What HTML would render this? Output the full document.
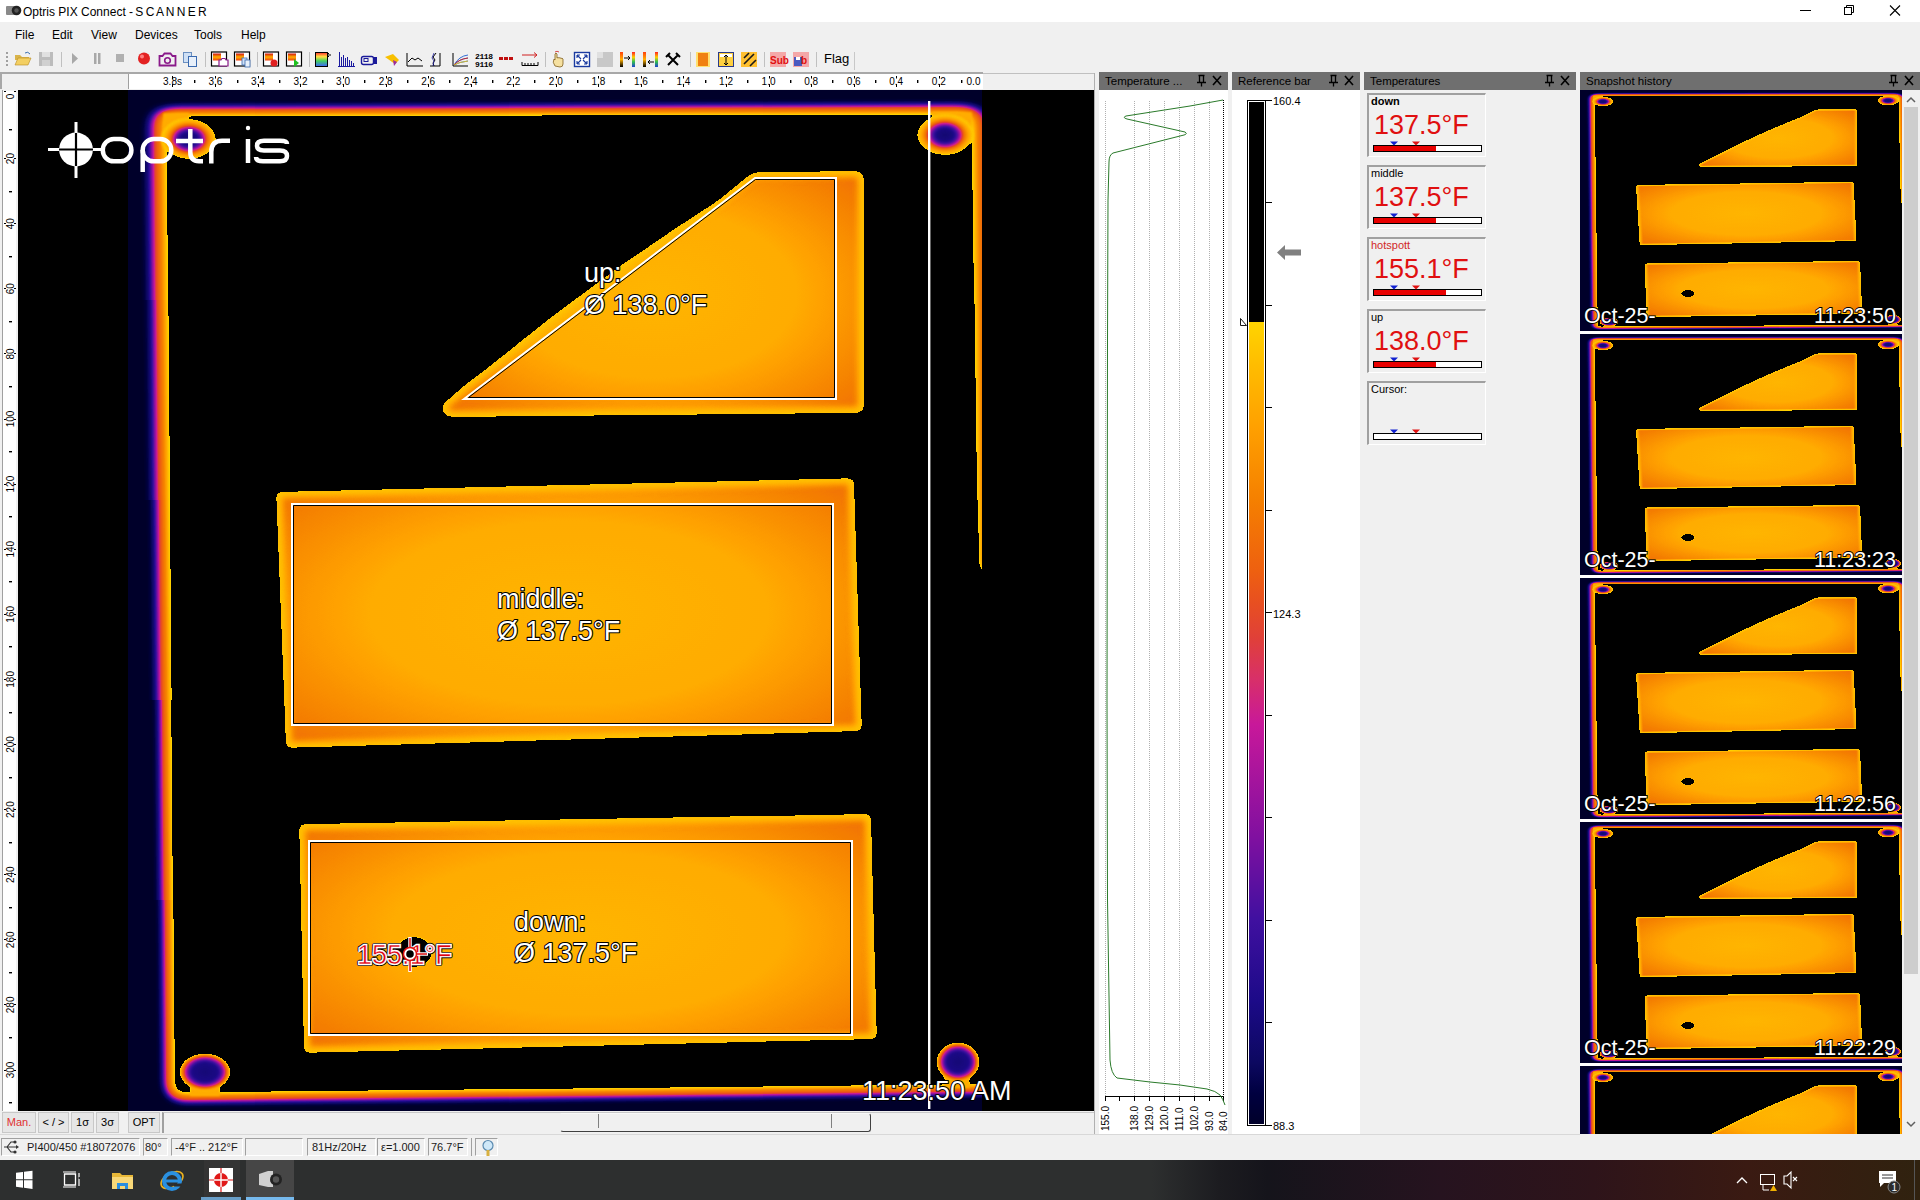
<!DOCTYPE html><html><head><meta charset="utf-8"><style>
*{margin:0;padding:0;box-sizing:border-box}
html,body{width:1920px;height:1200px;overflow:hidden;background:#f0f0f0;font-family:"Liberation Sans",sans-serif;font-size:12px;color:#000}
.a{position:absolute}
.t{position:absolute;white-space:nowrap}
.hdr{position:absolute;top:72px;height:18px;background:#6f6f6f;color:#000;font-size:11.5px}
.hdr span{position:absolute;left:6px;top:3px}
</style></head><body>
<div class="a" style="left:0;top:0;width:1920px;height:22px;background:#fff"></div>
<div class="a" style="left:0;top:22px;width:1920px;height:24px;background:#f0f0f0"></div>
<div class="a" style="left:0;top:46px;width:1920px;height:26px;background:#f0f0f0"></div>
<svg class="a" style="left:0;top:0" width="1920" height="1200" viewBox="0 0 1920 1200"><defs><clipPath id="strip0"><rect x="0" y="0" width="1100" height="300"/></clipPath><filter id="bPl0" x="-0.1" y="-0.1" width="1.2" height="1.2" color-interpolation-filters="sRGB"><feGaussianBlur stdDeviation="8 5"/><feComponentTransfer><feFuncA type="table" tableValues="0 0.096 0.242 0.365 0.488 0.54 0.585 0.63 0.698 0.785 1"/></feComponentTransfer></filter><clipPath id="strip1"><rect x="0" y="300" width="1100" height="200"/></clipPath><filter id="bPl1" x="-0.1" y="-0.1" width="1.2" height="1.2" color-interpolation-filters="sRGB"><feGaussianBlur stdDeviation="7.4 5"/><feComponentTransfer><feFuncA type="table" tableValues="0 0.096 0.242 0.365 0.488 0.54 0.585 0.63 0.698 0.785 1"/></feComponentTransfer></filter><clipPath id="strip2"><rect x="0" y="500" width="1100" height="200"/></clipPath><filter id="bPl2" x="-0.1" y="-0.1" width="1.2" height="1.2" color-interpolation-filters="sRGB"><feGaussianBlur stdDeviation="6.8 5"/><feComponentTransfer><feFuncA type="table" tableValues="0 0.096 0.242 0.365 0.488 0.54 0.585 0.63 0.698 0.785 1"/></feComponentTransfer></filter><clipPath id="strip3"><rect x="0" y="700" width="1100" height="200"/></clipPath><filter id="bPl3" x="-0.1" y="-0.1" width="1.2" height="1.2" color-interpolation-filters="sRGB"><feGaussianBlur stdDeviation="6.1 5"/><feComponentTransfer><feFuncA type="table" tableValues="0 0.096 0.242 0.365 0.488 0.54 0.585 0.63 0.698 0.785 1"/></feComponentTransfer></filter><clipPath id="strip4"><rect x="0" y="900" width="1100" height="300"/></clipPath><filter id="bPl4" x="-0.1" y="-0.1" width="1.2" height="1.2" color-interpolation-filters="sRGB"><feGaussianBlur stdDeviation="5.4 5"/><feComponentTransfer><feFuncA type="table" tableValues="0 0.096 0.242 0.365 0.488 0.54 0.585 0.63 0.698 0.785 1"/></feComponentTransfer></filter>
<filter id="pal" x="0" y="0" width="1" height="1" color-interpolation-filters="sRGB"><feComponentTransfer><feFuncR type="table" tableValues="0 0 0 0 0 0 0 0 0.002 0.008 0.014 0.021 0.027 0.033 0.039 0.045 0.05 0.054 0.058 0.062 0.066 0.07 0.075 0.079 0.083 0.087 0.091 0.095 0.099 0.103 0.107 0.113 0.119 0.126 0.133 0.14 0.147 0.154 0.161 0.168 0.175 0.182 0.189 0.196 0.203 0.209 0.216 0.223 0.23 0.237 0.244 0.251 0.263 0.276 0.288 0.3 0.312 0.325 0.337 0.349 0.362 0.374 0.386 0.399 0.411 0.423 0.436 0.448 0.46 0.472 0.485 0.497 0.508 0.518 0.528 0.538 0.548 0.558 0.568 0.578 0.589 0.599 0.609 0.619 0.629 0.639 0.649 0.659 0.669 0.679 0.689 0.699 0.709 0.719 0.729 0.74 0.75 0.76 0.77 0.78 0.787 0.793 0.798 0.804 0.809 0.815 0.82 0.826 0.831 0.837 0.842 0.847 0.85 0.853 0.857 0.86 0.863 0.866 0.869 0.872 0.875 0.878 0.882 0.885 0.889 0.892 0.896 0.899 0.903 0.906 0.91 0.913 0.916 0.919 0.922 0.925 0.928 0.931 0.934 0.935 0.937 0.938 0.94 0.941 0.943 0.945 0.946 0.948 0.949 0.951 0.952 0.954 0.955 0.957 0.958 0.96 0.962 0.964 0.966 0.968 0.971 0.973 0.975 0.977 0.979 0.982 0.984 0.986 0.988 0.99 0.993 0.995 0.997 0.999 1 1 1 1 1 1 1 1 1 1 1 1 1 1 1 1 1 1 1 1 1 1 1 1 1 1 1 0 0 0 0 0 0 0 0 0 0 0 0 0 0 0 0 0 0 0 0 0 0 0 0 0 0 0 0 0 0 0 0 0 0 0 0 0 0 0 0 0 0 0 0 0 0 0 0 0 0 0 0 0 0 0"/>
<feFuncG type="table" tableValues="0 0 0 0 0 0 0 0 0.001 0.006 0.01 0.014 0.018 0.022 0.026 0.03 0.032 0.032 0.033 0.033 0.034 0.034 0.035 0.035 0.036 0.036 0.037 0.037 0.038 0.038 0.039 0.04 0.041 0.042 0.043 0.044 0.045 0.047 0.048 0.049 0.05 0.051 0.052 0.054 0.055 0.056 0.057 0.058 0.059 0.06 0.062 0.063 0.063 0.063 0.063 0.063 0.063 0.063 0.063 0.063 0.063 0.063 0.063 0.063 0.063 0.063 0.063 0.063 0.063 0.063 0.063 0.063 0.063 0.065 0.066 0.067 0.068 0.069 0.07 0.071 0.072 0.073 0.075 0.076 0.077 0.078 0.079 0.08 0.081 0.082 0.084 0.085 0.086 0.087 0.088 0.089 0.09 0.091 0.092 0.094 0.099 0.107 0.115 0.123 0.131 0.14 0.148 0.156 0.164 0.172 0.181 0.189 0.195 0.201 0.207 0.213 0.219 0.226 0.232 0.238 0.244 0.25 0.257 0.264 0.271 0.278 0.285 0.292 0.299 0.306 0.313 0.322 0.33 0.338 0.346 0.354 0.363 0.371 0.379 0.386 0.393 0.4 0.407 0.414 0.421 0.428 0.435 0.442 0.449 0.456 0.463 0.47 0.477 0.484 0.491 0.498 0.505 0.512 0.519 0.526 0.533 0.54 0.547 0.554 0.561 0.568 0.575 0.582 0.589 0.597 0.604 0.611 0.618 0.625 0.632 0.639 0.646 0.653 0.66 0.668 0.675 0.682 0.689 0.696 0.704 0.711 0.718 0.725 0.732 0.74 0.748 0.757 0.766 0.774 0.783 0.791 0.8 0.808 0.817 0.826 0.831 0 0 0 0 0 0 0 0 0 0 0 0 0 0 0 0 0 0 0 0 0 0 0 0 0 0 0 0 0 0 0 0 0 0 0 0 0 0 0 0 0 0 0 0 0 0 0 0 0 0 0 0 0 0 0"/>
<feFuncB type="table" tableValues="0.165 0.176 0.187 0.199 0.21 0.221 0.232 0.244 0.257 0.273 0.29 0.306 0.322 0.339 0.355 0.372 0.384 0.394 0.404 0.414 0.425 0.435 0.445 0.455 0.466 0.476 0.486 0.496 0.507 0.517 0.527 0.535 0.54 0.544 0.549 0.554 0.558 0.563 0.567 0.572 0.577 0.581 0.586 0.591 0.595 0.6 0.604 0.609 0.614 0.618 0.623 0.627 0.627 0.627 0.627 0.627 0.627 0.627 0.627 0.627 0.627 0.627 0.627 0.627 0.627 0.627 0.627 0.627 0.627 0.627 0.627 0.627 0.627 0.626 0.625 0.624 0.624 0.623 0.622 0.621 0.62 0.619 0.619 0.618 0.617 0.616 0.615 0.614 0.614 0.613 0.612 0.611 0.61 0.609 0.608 0.608 0.607 0.606 0.605 0.604 0.595 0.577 0.56 0.543 0.526 0.509 0.492 0.475 0.458 0.441 0.424 0.406 0.388 0.37 0.351 0.333 0.314 0.296 0.277 0.259 0.24 0.222 0.21 0.2 0.189 0.179 0.168 0.158 0.147 0.137 0.126 0.118 0.109 0.101 0.093 0.085 0.077 0.068 0.062 0.058 0.055 0.051 0.048 0.044 0.041 0.037 0.034 0.03 0.027 0.023 0.02 0.016 0.012 0.009 0.005 0.002 0 0 0 0 0 0 0 0 0 0 0 0 0 0 0 0 0 0 0 0 0 0 0 0 0 0 0 0 0 0 0 0 0 0 0 0 0 0 0 0 0 0 0 0 0 0 0 0 0 0 0 0 0 0 0 0 0 0 0 0 0 0 0 0 0 0 0 0 0 0 0 0 0 0 0 0 0 0 0 0 0 0 0 0 0 0 0 0 0 0 0 0 0 0 0 0 0 0 0 0"/>
</feComponentTransfer></filter>
<filter id="bPlate" x="-0.1" y="-0.1" width="1.2" height="1.2" color-interpolation-filters="sRGB"><feGaussianBlur stdDeviation="6.7 5"/><feComponentTransfer><feFuncA type="table" tableValues="0 0.096 0.242 0.365 0.488 0.54 0.585 0.63 0.698 0.785 1"/></feComponentTransfer></filter>
<filter id="b3" x="-0.1" y="-0.1" width="1.2" height="1.2" color-interpolation-filters="sRGB"><feGaussianBlur stdDeviation="3"/></filter>
<filter id="b1" x="-0.3" y="-0.3" width="1.6" height="1.6" color-interpolation-filters="sRGB"><feGaussianBlur stdDeviation="1.2"/></filter>
<radialGradient id="obj" cx="0.5" cy="0.5" r="0.68"><stop offset="0" stop-color="#b9b9b9"/><stop offset="0.5" stop-color="#b4b4b4"/><stop offset="1" stop-color="#939393"/></radialGradient>
<radialGradient id="hole" cx="0.5" cy="0.5" r="0.5"><stop offset="0" stop-color="#161616"/><stop offset="0.3" stop-color="#1c1c1c"/><stop offset="0.46" stop-color="#404040"/><stop offset="0.56" stop-color="#6b6b6b"/><stop offset="0.68" stop-color="#999"/><stop offset="0.85" stop-color="#b8b8b8"/><stop offset="1" stop-color="#c7c7c7"/></radialGradient>
<radialGradient id="hole2" cx="0.5" cy="0.5" r="0.5"><stop offset="0" stop-color="#181818"/><stop offset="0.5" stop-color="#1e1e1e"/><stop offset="0.66" stop-color="#404040"/><stop offset="0.76" stop-color="#6b6b6b"/><stop offset="0.86" stop-color="#999"/><stop offset="1" stop-color="#c7c7c7"/></radialGradient>
<clipPath id="cam"><rect x="128" y="90" width="854" height="1021"/></clipPath>
<clipPath id="cobj0"><path d="M442.5,407.5 Q443.0,404.0 445.7,401.7 L459.7,389.6 Q465.0,385.0 470.6,380.8 L484.4,370.2 Q490.0,366.0 495.5,361.6 L514.5,346.4 Q520.0,342.0 525.5,337.6 L544.5,322.4 Q550.0,318.0 555.6,313.8 L614.4,270.2 Q620.0,266.0 625.8,262.1 L664.2,235.9 Q670.0,232.0 675.8,228.1 L714.2,202.9 Q720.0,199.0 725.4,194.5 L746.1,177.4 Q749.0,175.0 752.5,173.5 L752.5,173.5 Q756.0,172.0 759.8,172.0 L855.5,171.0 Q859.0,171.0 861.5,173.5 L861.5,173.5 Q864.0,176.0 864.0,179.5 L864.0,405.8 Q864.0,409.0 861.5,411.0 L861.5,411.0 Q859.0,413.0 855.8,413.0 L452.2,417.0 Q448.0,417.0 445.0,414.0 L444.5,413.5 Q442.0,411.0 442.5,407.5 Z"/></clipPath>
<clipPath id="cobj1"><path d="M276.3,499.0 Q276.0,492.0 283.0,491.8 L847.0,478.2 Q854.0,478.0 854.2,485.0 L861.8,724.0 Q862.0,731.0 855.0,731.2 L293.0,747.8 Q286.0,748.0 285.7,741.0 Z"/></clipPath>
<clipPath id="cobj2"><path d="M299.2,831.0 Q299.0,824.0 306.0,823.9 L864.0,814.1 Q871.0,814.0 871.2,821.0 L876.8,1032.0 Q877.0,1039.0 870.0,1039.2 L311.0,1052.8 Q304.0,1053.0 303.8,1046.0 Z"/></clipPath>
<g id="sceneRest"><rect x="163" y="113" width="26" height="26" fill="#b4b4b4" filter="url(#b1)"/>
<rect x="932" y="112" width="40" height="24" fill="#b4b4b4" filter="url(#b1)"/>
<rect x="190" y="1072" width="30" height="24" fill="#b4b4b4" filter="url(#b1)"/>
<rect x="944" y="1062" width="26" height="26" fill="#b4b4b4" filter="url(#b1)"/>
<ellipse cx="189" cy="139" rx="28" ry="21" fill="url(#hole)" filter="url(#b1)"/>
<ellipse cx="945" cy="135" rx="29" ry="21" fill="url(#hole)" filter="url(#b1)"/>
<ellipse cx="205" cy="1072" rx="26" ry="19" fill="url(#hole2)" filter="url(#b1)"/>
<ellipse cx="958" cy="1062" rx="22" ry="20" fill="url(#hole2)" filter="url(#b1)"/>
<g clip-path="url(#cobj0)"><path d="M442.5,407.5 Q443.0,404.0 445.7,401.7 L459.7,389.6 Q465.0,385.0 470.6,380.8 L484.4,370.2 Q490.0,366.0 495.5,361.6 L514.5,346.4 Q520.0,342.0 525.5,337.6 L544.5,322.4 Q550.0,318.0 555.6,313.8 L614.4,270.2 Q620.0,266.0 625.8,262.1 L664.2,235.9 Q670.0,232.0 675.8,228.1 L714.2,202.9 Q720.0,199.0 725.4,194.5 L746.1,177.4 Q749.0,175.0 752.5,173.5 L752.5,173.5 Q756.0,172.0 759.8,172.0 L855.5,171.0 Q859.0,171.0 861.5,173.5 L861.5,173.5 Q864.0,176.0 864.0,179.5 L864.0,405.8 Q864.0,409.0 861.5,411.0 L861.5,411.0 Q859.0,413.0 855.8,413.0 L452.2,417.0 Q448.0,417.0 445.0,414.0 L444.5,413.5 Q442.0,411.0 442.5,407.5 Z" fill="url(#obj)"/><path d="M442.5,407.5 Q443.0,404.0 445.7,401.7 L459.7,389.6 Q465.0,385.0 470.6,380.8 L484.4,370.2 Q490.0,366.0 495.5,361.6 L514.5,346.4 Q520.0,342.0 525.5,337.6 L544.5,322.4 Q550.0,318.0 555.6,313.8 L614.4,270.2 Q620.0,266.0 625.8,262.1 L664.2,235.9 Q670.0,232.0 675.8,228.1 L714.2,202.9 Q720.0,199.0 725.4,194.5 L746.1,177.4 Q749.0,175.0 752.5,173.5 L752.5,173.5 Q756.0,172.0 759.8,172.0 L855.5,171.0 Q859.0,171.0 861.5,173.5 L861.5,173.5 Q864.0,176.0 864.0,179.5 L864.0,405.8 Q864.0,409.0 861.5,411.0 L861.5,411.0 Q859.0,413.0 855.8,413.0 L452.2,417.0 Q448.0,417.0 445.0,414.0 L444.5,413.5 Q442.0,411.0 442.5,407.5 Z" fill="none" stroke="#c0c0c0" stroke-width="12" filter="url(#b3)"/></g>
<g clip-path="url(#cobj1)"><path d="M276.3,499.0 Q276.0,492.0 283.0,491.8 L847.0,478.2 Q854.0,478.0 854.2,485.0 L861.8,724.0 Q862.0,731.0 855.0,731.2 L293.0,747.8 Q286.0,748.0 285.7,741.0 Z" fill="url(#obj)"/><path d="M276.3,499.0 Q276.0,492.0 283.0,491.8 L847.0,478.2 Q854.0,478.0 854.2,485.0 L861.8,724.0 Q862.0,731.0 855.0,731.2 L293.0,747.8 Q286.0,748.0 285.7,741.0 Z" fill="none" stroke="#c0c0c0" stroke-width="12" filter="url(#b3)"/></g>
<g clip-path="url(#cobj2)"><path d="M299.2,831.0 Q299.0,824.0 306.0,823.9 L864.0,814.1 Q871.0,814.0 871.2,821.0 L876.8,1032.0 Q877.0,1039.0 870.0,1039.2 L311.0,1052.8 Q304.0,1053.0 303.8,1046.0 Z" fill="url(#obj)"/><path d="M299.2,831.0 Q299.0,824.0 306.0,823.9 L864.0,814.1 Q871.0,814.0 871.2,821.0 L876.8,1032.0 Q877.0,1039.0 870.0,1039.2 L311.0,1052.8 Q304.0,1053.0 303.8,1046.0 Z" fill="none" stroke="#c0c0c0" stroke-width="12" filter="url(#b3)"/></g>
<ellipse cx="414" cy="952" rx="17" ry="14" fill="#fff" filter="url(#b1)"/></g>
<g id="scene"><rect x="100" y="60" width="920" height="1080" fill="#000"/><g clip-path="url(#strip0)"><g filter="url(#bPl0)"><path d="M171.76,110.6 L962,108.6 Q981.5,108.6 981.5,128 L987.5,569 L1010,569 L1010,1090 L985,1090 L181.76,1098.4 Q164.76,1098.4 164.76,1082 L156.76,127 Q156.76,110.6 171.76,110.6 Z" fill="#fff"/></g></g><g clip-path="url(#strip1)"><g filter="url(#bPl1)"><path d="M172.528,110.6 L962,108.6 Q981.5,108.6 981.5,128 L987.5,569 L1010,569 L1010,1090 L985,1090 L182.528,1098.4 Q165.528,1098.4 165.528,1082 L157.528,127 Q157.528,110.6 172.528,110.6 Z" fill="#fff"/></g></g><g clip-path="url(#strip2)"><g filter="url(#bPl2)"><path d="M173.296,110.6 L962,108.6 Q981.5,108.6 981.5,128 L987.5,569 L1010,569 L1010,1090 L985,1090 L183.296,1098.4 Q166.296,1098.4 166.296,1082 L158.296,127 Q158.296,110.6 173.296,110.6 Z" fill="#fff"/></g></g><g clip-path="url(#strip3)"><g filter="url(#bPl3)"><path d="M174.192,110.6 L962,108.6 Q981.5,108.6 981.5,128 L987.5,569 L1010,569 L1010,1090 L985,1090 L184.192,1098.4 Q167.192,1098.4 167.192,1082 L159.192,127 Q159.192,110.6 174.192,110.6 Z" fill="#fff"/></g></g><g clip-path="url(#strip4)"><g filter="url(#bPl4)"><path d="M175.088,110.6 L962,108.6 Q981.5,108.6 981.5,128 L987.5,569 L1010,569 L1010,1090 L985,1090 L185.088,1098.4 Q168.088,1098.4 168.088,1082 L160.088,127 Q160.088,110.6 175.088,110.6 Z" fill="#fff"/></g></g><use href="#sceneRest"/></g>
<g id="sceneT"><rect x="100" y="60" width="920" height="1080" fill="#000"/><g filter="url(#bPlate)"><path d="M173.424,110.6 L962,108.6 Q981.5,108.6 981.5,128 L987.5,569 L1010,569 L1010,1090 L985,1090 L183.424,1098.4 Q166.424,1098.4 166.424,1082 L158.424,127 Q158.424,110.6 173.424,110.6 Z" fill="#fff"/></g><use href="#sceneRest"/></g>
</defs>
<rect x="18" y="90" width="1076" height="1021" fill="#000"/>
<g clip-path="url(#cam)"><g filter="url(#pal)"><use href="#scene"/></g></g>
<polygon points="464,399 755,178 836,178 836,399" fill="none" stroke="#fff" stroke-width="2"/>
<polygon points="468.455,397.5 755.505,179.5 834.5,179.5 834.5,397.5" fill="none" stroke="#000" stroke-width="1"/>
<polygon points="292,504 833,504 833,725 292,725" fill="none" stroke="#fff" stroke-width="2"/>
<polygon points="293.5,505.5 831.5,505.5 831.5,723.5 293.5,723.5" fill="none" stroke="#000" stroke-width="1"/>
<polygon points="309,841 852,841 852,1035 309,1035" fill="none" stroke="#fff" stroke-width="2"/>
<polygon points="310.5,842.5 850.5,842.5 850.5,1033.5 310.5,1033.5" fill="none" stroke="#000" stroke-width="1"/>
<text x="584" y="282" font-family="Liberation Sans" font-size="27" fill="#fff" stroke="#000" stroke-width="2.2" paint-order="stroke" stroke-linejoin="round" >up:</text>
<text x="584" y="313.5" font-family="Liberation Sans" font-size="27" fill="#fff" stroke="#000" stroke-width="2.2" paint-order="stroke" stroke-linejoin="round" >&#216; 138.0&#176;F</text>
<text x="497" y="608" font-family="Liberation Sans" font-size="27" fill="#fff" stroke="#000" stroke-width="2.2" paint-order="stroke" stroke-linejoin="round" >middle:</text>
<text x="497" y="639.5" font-family="Liberation Sans" font-size="27" fill="#fff" stroke="#000" stroke-width="2.2" paint-order="stroke" stroke-linejoin="round" >&#216; 137.5&#176;F</text>
<text x="514" y="931" font-family="Liberation Sans" font-size="27" fill="#fff" stroke="#000" stroke-width="2.2" paint-order="stroke" stroke-linejoin="round" >down:</text>
<text x="514" y="962" font-family="Liberation Sans" font-size="27" fill="#fff" stroke="#000" stroke-width="2.2" paint-order="stroke" stroke-linejoin="round" >&#216; 137.5&#176;F</text>
<text x="357" y="964" font-family="Liberation Sans" font-size="27" fill="none" stroke="#000" stroke-width="4.2" paint-order="stroke" stroke-linejoin="round" >155.1&#176;F</text>
<text x="357" y="964" font-family="Liberation Sans" font-size="27" fill="none" stroke="#fff" stroke-width="2.4">155.1&#176;F</text>
<text x="357" y="964" font-family="Liberation Sans" font-size="27" fill="#e00010" stroke="#fff" stroke-width="0.5">155.1&#176;F</text>
<path d="M410,937 V972 M416,954 H428" stroke="#fff" stroke-width="3.5"/>
<path d="M410,938 V971 M416,954 H427" stroke="#e01010" stroke-width="1.5"/>
<circle cx="410" cy="954" r="6.5" fill="#fff" stroke="#e01010" stroke-width="1.5"/>
<circle cx="410" cy="954" r="3.8" fill="#000"/>
<rect x="928" y="101" width="2.4" height="1008" fill="#fff"/>
<text x="862" y="1100" font-family="Liberation Sans" font-size="27" fill="#fff" stroke="#000" stroke-width="2" paint-order="stroke" stroke-linejoin="round" >11:23:50 AM</text>
<g fill="none" stroke="#fff" stroke-width="4.5">
<circle cx="76" cy="149.5" r="16.9" fill="#fff" stroke="none"/>
<path d="M76,122 V178" stroke-width="3"/><path d="M48,149.5 H102" stroke-width="3"/>
<path d="M76,133 V166 M59,149.5 H93" stroke="#000" stroke-width="2.2"/>
<rect x="102.8" y="139" width="28.6" height="22.3" rx="11" ry="11"/>
<rect x="142.7" y="139" width="28.6" height="22.3" rx="11" ry="11"/>
<path d="M142.7,150 V172"/>
<path d="M190.3,129 V152 Q190.3,161.2 199,161.2 H203 M176,141 H203"/>
<path d="M211.3,163.5 V152 Q211.3,140.8 222,140.8 H230"/>
<path d="M248,139 V163"/><circle cx="248" cy="128" r="2.2" fill="#fff" stroke="none"/>
<path d="M287,144 Q287,140.8 280,140.8 H264 Q257,140.8 257,145.8 Q257,150.5 264,150.5 H280 Q287,150.5 287,156 Q287,161.2 280,161.2 H263 Q256,161.2 256,157"/>
</g>
</svg>
<svg class="a" style="left:6px;top:4px" width="16" height="14" viewBox="0 0 16 14"><rect x="0" y="2" width="9" height="9" rx="1" fill="#8a8a8a"/><circle cx="10.5" cy="6.5" r="4.8" fill="#222"/><circle cx="10.5" cy="6.5" r="2.2" fill="#555"/></svg>
<div class="t" style="left:23px;top:5px;font-size:12px;color:#000;">Optris PIX Connect</div>
<div class="t" style="left:129px;top:5px;font-size:12px;color:#000;letter-spacing:-0.5px">- S C A N N E R</div>
<svg class="a" style="left:1790px;top:0" width="130" height="22" viewBox="0 0 130 22"><path d="M10,10.5 H21" stroke="#000" stroke-width="1"/><rect x="54.5" y="7.5" width="7" height="7" fill="none" stroke="#000"/><path d="M56.5,7.5 V5.5 H63.5 V12.5 H61.5" fill="none" stroke="#000"/><path d="M100,5.5 L110,15.5 M110,5.5 L100,15.5" stroke="#000" stroke-width="1.1"/></svg>
<div class="t" style="left:15px;top:28px;font-size:12px;color:#000;">File</div>
<div class="t" style="left:52px;top:28px;font-size:12px;color:#000;">Edit</div>
<div class="t" style="left:91px;top:28px;font-size:12px;color:#000;">View</div>
<div class="t" style="left:135px;top:28px;font-size:12px;color:#000;">Devices</div>
<div class="t" style="left:194px;top:28px;font-size:12px;color:#000;">Tools</div>
<div class="t" style="left:241px;top:28px;font-size:12px;color:#000;">Help</div>
<svg class="a" style="left:0;top:46px" width="900" height="26" viewBox="0 46 900 26">
<rect x="6" y="52" width="2" height="2" fill="#a0a0a0"/>
<rect x="6" y="56" width="2" height="2" fill="#a0a0a0"/>
<rect x="6" y="60" width="2" height="2" fill="#a0a0a0"/>
<rect x="6" y="64" width="2" height="2" fill="#a0a0a0"/>
<path d="M15,55 h5 l2,2 h7 v3 h-14 z" fill="#d9b44a"/><path d="M15,65 l3,-7 h13 l-3,7 z" fill="#f3cf62" stroke="#b88a20" stroke-width="0.6"/><path d="M25,53 q3,-2 5,1" fill="none" stroke="#3a6fb0" stroke-width="1"/>
<rect x="39" y="52" width="14" height="14" fill="#bcbcbc"/><rect x="42" y="52" width="8" height="5" fill="#e0e0e0"/><rect x="42" y="60" width="8" height="6" fill="#d0d0d0"/>
<rect x="61" y="52" width="1" height="15" fill="#c0c0c0"/>
<path d="M72,53 l6,5.5 l-6,5.5 z" fill="#a8a8a8"/>
<rect x="94" y="53" width="2.5" height="11" fill="#a8a8a8"/><rect x="98" y="53" width="2.5" height="11" fill="#a8a8a8"/>
<rect x="116" y="54" width="8" height="8" fill="#b0b0b0"/>
<circle cx="144" cy="58.5" r="6" fill="#e32222"/><circle cx="142" cy="56.5" r="2" fill="#ff8080"/>
<path d="M159.5,56 h3 l2,-2.5 h6 l2,2.5 h3 v9.5 h-16 z" fill="none" stroke="#8a1a8a" stroke-width="1.8"/><circle cx="167.5" cy="60.5" r="2.8" fill="none" stroke="#8a1a8a" stroke-width="1.6"/>
<rect x="183.5" y="52.5" width="8" height="10" fill="#cfe0f5" stroke="#6a8fc0"/><rect x="188.5" y="56.5" width="8" height="10" fill="#e8f0fa" stroke="#3a6ab0"/>
<rect x="205" y="52" width="1" height="15" fill="#c0c0c0"/>
<defs><linearGradient id="tbgrad" x1="0" y1="0" x2="0" y2="1"><stop offset="0" stop-color="#d01010"/><stop offset="0.5" stop-color="#ffb000"/><stop offset="1" stop-color="#f04010"/></linearGradient><linearGradient id="rainbow" x1="0" y1="0" x2="0" y2="1"><stop offset="0" stop-color="#ff3030"/><stop offset="0.3" stop-color="#ffe040"/><stop offset="0.6" stop-color="#40d060"/><stop offset="1" stop-color="#4060ff"/></linearGradient><linearGradient id="iron" x1="0" y1="0" x2="0" y2="1"><stop offset="0" stop-color="#ff2020"/><stop offset="0.35" stop-color="#ffd000"/><stop offset="0.65" stop-color="#30c050"/><stop offset="1" stop-color="#2040d0"/></linearGradient><linearGradient id="ironb" x1="0" y1="0" x2="0" y2="1"><stop offset="0" stop-color="#ff4010"/><stop offset="0.5" stop-color="#ffb000"/><stop offset="1" stop-color="#000"/></linearGradient></defs>
<rect x="211.5" y="52" width="15" height="14" fill="#fff" stroke="#000" stroke-width="1.2"/>
<rect x="213" y="53.5" width="8" height="7" fill="url(#tbgrad)"/>
<path d="M219,60 h2 l1,-1.5 h3 l1,1.5 h2 v6 h-9 z" fill="#fff" stroke="#8a1a8a" stroke-width="1.2"/>
<rect x="234.5" y="52" width="15" height="14" fill="#fff" stroke="#000" stroke-width="1.2"/>
<rect x="236" y="53.5" width="8" height="7" fill="url(#tbgrad)"/>
<rect x="242" y="58" width="5" height="7" fill="#cfe0f5" stroke="#3a6ab0" stroke-width="0.8"/><rect x="245" y="60" width="5" height="7" fill="#e8f0fa" stroke="#3a6ab0" stroke-width="0.8"/>
<rect x="257" y="52" width="1" height="15" fill="#c0c0c0"/>
<rect x="263.5" y="52" width="15" height="14" fill="#fff" stroke="#000" stroke-width="1.2"/>
<rect x="265" y="53.5" width="8" height="7" fill="url(#tbgrad)"/>
<circle cx="274" cy="63" r="3.5" fill="#e02020"/>
<rect x="286.5" y="52" width="15" height="14" fill="#fff" stroke="#000" stroke-width="1.2"/>
<rect x="288" y="53.5" width="8" height="7" fill="url(#tbgrad)"/>
<path d="M294,59 l5,4 l-5,4 z" fill="#20c020"/>
<rect x="309" y="52" width="1" height="15" fill="#c0c0c0"/>
<rect x="315.5" y="52.5" width="12" height="14" fill="url(#rainbow)" stroke="#000"/><path d="M331,55 h-4 m2,-2 l-2,2 l2,2" fill="none" stroke="#000"/>
<path d="M338,66.5 h17 M339.5,66 V52 M341.5,66 V57 M343.5,66 V55 M345.5,66 V58 M347.5,66 V57 M349.5,66 V60 M351.5,66 V61 M353.5,66 V63" stroke="#1a1aa0" stroke-width="1"/>
<rect x="361.5" y="56.5" width="12" height="8" rx="2" fill="none" stroke="#1a1a9a" stroke-width="1.4"/><rect x="374" y="57" width="3" height="7" fill="#1a1a9a"/><rect x="364" y="58.5" width="4" height="3" fill="none" stroke="#1a1a9a"/>
<path d="M385,57 l8,-3 l6,6 l-4,4 z" fill="#f8c000"/><path d="M393,60 l4,2 l-3,4 z" fill="#9a2aa0"/>
<path d="M407,53 V66 H423 M408,62 l4,-4 l3,2 l3,-2 l4,3" fill="none" stroke="#000" stroke-width="1"/>
<path d="M430,66 H440 V53 M436,53 l-3,4 l2,3 l-2,3 l1,3" fill="none" stroke="#000" stroke-width="1"/><path d="M434,53 l-2,5 l2,3 l-1,5" fill="none" stroke="#1a1a9a" stroke-width="0.8"/>
<path d="M453,53 V66 H468" fill="none" stroke="#000"/><path d="M454,65 q5,-9 14,-10 M454,65 q5,-6 14,-7 M454,65 q5,-3 14,-4" fill="none" stroke="#2060d0" stroke-width="0.9"/><path d="M454,65 q5,-6 14,-7" fill="none" stroke="#d02020" stroke-width="0.9"/><path d="M454,65 q5,-3 14,-4" fill="none" stroke="#e0c020" stroke-width="0.9"/>
<text x="475" y="59" font-family="Liberation Mono" font-size="8" font-weight="bold" fill="#000" textLength="18">2118</text><text x="475" y="66.5" font-family="Liberation Mono" font-size="8" font-weight="bold" fill="#000" textLength="18">9110</text>
<rect x="499" y="57" width="4" height="3" fill="#c01010"/><rect x="504" y="57" width="4" height="3" fill="#c01010"/><rect x="509" y="57" width="4" height="3" fill="#c01010"/>
<path d="M522,55 H537 M534,52.5 L537,55 L534,57.5" fill="none" stroke="#d02020" stroke-width="1"/><path d="M522,62 V65.5 H538 V62 M525,65 V63 M528,65 V63 M531,65 V63 M534,65 V63" fill="none" stroke="#000" stroke-width="1"/>
<rect x="545" y="52" width="1" height="15" fill="#c0c0c0"/>
<path d="M555,66 q-3,-4 -1,-7 l1,1 v-6 q1,-2 2,0 v4 q1,-1 2,0 q1,-1 2,0.5 q1,-1 2,0.5 v5 q0,3 -3,3 z" fill="#f5e0a0" stroke="#806020" stroke-width="0.8"/><path d="M555,52 q2,-1.5 4,0" stroke="#d02020" fill="none" stroke-width="0.8"/>
<rect x="574.5" y="52.5" width="15" height="14" fill="#fff" stroke="#1a3aa0" stroke-width="1.4"/><path d="M577,55 l4,4 M577,55 h3 M577,55 v3 M587,55 l-4,4 M587,55 h-3 M587,55 v3 M577,64 l4,-4 M577,64 h3 M577,64 v-3 M587,64 l-4,-4 M587,64 h-3 M587,64 v-3" stroke="#1a3aa0" stroke-width="1.1" fill="none"/>
<rect x="597" y="52" width="16" height="15" fill="#c8c8c8"/><rect x="597" y="52" width="6" height="6" fill="#e0e0e0"/>
<rect x="620" y="52" width="3" height="15" fill="url(#ironb)"/><rect x="632" y="52" width="3" height="15" fill="url(#iron)"/><path d="M624,58 h6 m-2,-2 l2,2 l-2,2" stroke="#000" fill="none"/>
<rect x="643" y="52" width="3" height="15" fill="url(#ironb)"/><rect x="655" y="52" width="3" height="15" fill="url(#iron)"/><path d="M654,62 h-6 m2,-2 l-2,2 l2,2" stroke="#000" fill="none"/>
<path d="M668,55 l10,10 M678,55 l-10,10 M666,57 l4,-4 M676,53 l4,4" stroke="#000" stroke-width="2" fill="none"/>
<rect x="690" y="52" width="1" height="15" fill="#c0c0c0"/>
<rect x="696" y="52" width="14" height="15" fill="#ffe070"/><rect x="698" y="53" width="10" height="13" fill="#f08010"/>
<rect x="718.5" y="52.5" width="15" height="14" fill="#ffd040" stroke="#2a3a8a"/><rect x="720" y="54" width="12" height="3" fill="#fff"/><path d="M726,55 v10 m-2,-8 l2,-2 l2,2 m-4,6 l2,2 l2,-2" stroke="#000" fill="none"/>
<rect x="741" y="52" width="16" height="15" fill="#ffc030"/><path d="M744,64 l10,-10 M744,58 l5,-5 M750,66 l6,-6" stroke="#1a1a1a" stroke-width="1.6"/>
<rect x="764" y="52" width="1" height="15" fill="#c0c0c0"/>
<rect x="770" y="52" width="16" height="15" fill="#f4a8a8"/><text x="770" y="64" font-family="Liberation Sans" font-weight="bold" font-size="10" fill="#e01010">Sub</text>
<rect x="793" y="52" width="16" height="15" fill="#f4a8a8"/><rect x="794" y="57" width="8" height="9" fill="#4a5ac0"/><rect x="796" y="57" width="4" height="3" fill="#fff"/><text x="801" y="64" font-family="Liberation Sans" font-weight="bold" font-size="10" fill="#e01010">b</text>
<rect x="816" y="52" width="1" height="15" fill="#c0c0c0"/>
<rect x="854" y="52" width="1" height="18" fill="#c8c8c8"/>
</svg>
<div class="t" style="left:824px;top:51px;font-size:13px;color:#000;">Flag</div>
<div class="a" style="left:0;top:72px;width:983px;height:2px;background:#a8a8a8"></div>
<div class="a" style="left:983px;top:73px;width:112px;height:1px;background:#c0c0c0"></div>
<div class="a" style="left:0;top:74px;width:128px;height:15px;background:#f0f0f0;border-left:2px solid #a8a8a8"></div>
<div class="a" style="left:128px;top:74px;width:855px;height:15px;background:#fff;border-left:1px solid #a0a0a0"></div>
<div class="a" style="left:983px;top:74px;width:111px;height:15px;background:#f0f0f0"></div>
<div class="a" style="left:1094px;top:73px;width:1px;height:1061px;background:#b0b0b0"></div>
<svg class="a" style="left:0;top:0" width="1100" height="1120" viewBox="0 0 1100 1120">
<text x="172.5" y="85" font-family="Liberation Sans" font-size="10" text-anchor="middle" fill="#000">3.8s</text>
<path d="M172.5,76 V79 M172.5,84 V87" stroke="#000" stroke-width="1"/>
<text x="215.4" y="85" font-family="Liberation Sans" font-size="10" text-anchor="middle" fill="#000">3.6</text>
<path d="M215.5,76 V78.5 M215.5,84 V87" stroke="#000" stroke-width="1"/>
<rect x="194" y="80" width="1.4" height="3" fill="#000"/>
<text x="257.95" y="85" font-family="Liberation Sans" font-size="10" text-anchor="middle" fill="#000">3.4</text>
<path d="M258.5,76 V78.5 M258.5,84 V87" stroke="#000" stroke-width="1"/>
<rect x="237" y="80" width="1.4" height="3" fill="#000"/>
<text x="300.5" y="85" font-family="Liberation Sans" font-size="10" text-anchor="middle" fill="#000">3.2</text>
<path d="M300.5,76 V78.5 M300.5,84 V87" stroke="#000" stroke-width="1"/>
<rect x="279" y="80" width="1.4" height="3" fill="#000"/>
<text x="343.05" y="85" font-family="Liberation Sans" font-size="10" text-anchor="middle" fill="#000">3.0</text>
<path d="M343.5,76 V78.5 M343.5,84 V87" stroke="#000" stroke-width="1"/>
<rect x="322" y="80" width="1.4" height="3" fill="#000"/>
<text x="385.6" y="85" font-family="Liberation Sans" font-size="10" text-anchor="middle" fill="#000">2.8</text>
<path d="M386.5,76 V78.5 M386.5,84 V87" stroke="#000" stroke-width="1"/>
<rect x="364" y="80" width="1.4" height="3" fill="#000"/>
<text x="428.15" y="85" font-family="Liberation Sans" font-size="10" text-anchor="middle" fill="#000">2.6</text>
<path d="M428.5,76 V78.5 M428.5,84 V87" stroke="#000" stroke-width="1"/>
<rect x="407" y="80" width="1.4" height="3" fill="#000"/>
<text x="470.7" y="85" font-family="Liberation Sans" font-size="10" text-anchor="middle" fill="#000">2.4</text>
<path d="M471.5,76 V78.5 M471.5,84 V87" stroke="#000" stroke-width="1"/>
<rect x="449" y="80" width="1.4" height="3" fill="#000"/>
<text x="513.25" y="85" font-family="Liberation Sans" font-size="10" text-anchor="middle" fill="#000">2.2</text>
<path d="M513.5,76 V78.5 M513.5,84 V87" stroke="#000" stroke-width="1"/>
<rect x="492" y="80" width="1.4" height="3" fill="#000"/>
<text x="555.8" y="85" font-family="Liberation Sans" font-size="10" text-anchor="middle" fill="#000">2.0</text>
<path d="M556.5,76 V78.5 M556.5,84 V87" stroke="#000" stroke-width="1"/>
<rect x="534" y="80" width="1.4" height="3" fill="#000"/>
<text x="598.35" y="85" font-family="Liberation Sans" font-size="10" text-anchor="middle" fill="#000">1.8</text>
<path d="M598.5,76 V78.5 M598.5,84 V87" stroke="#000" stroke-width="1"/>
<rect x="577" y="80" width="1.4" height="3" fill="#000"/>
<text x="640.9" y="85" font-family="Liberation Sans" font-size="10" text-anchor="middle" fill="#000">1.6</text>
<path d="M641.5,76 V78.5 M641.5,84 V87" stroke="#000" stroke-width="1"/>
<rect x="620" y="80" width="1.4" height="3" fill="#000"/>
<text x="683.45" y="85" font-family="Liberation Sans" font-size="10" text-anchor="middle" fill="#000">1.4</text>
<path d="M683.5,76 V78.5 M683.5,84 V87" stroke="#000" stroke-width="1"/>
<rect x="662" y="80" width="1.4" height="3" fill="#000"/>
<text x="726" y="85" font-family="Liberation Sans" font-size="10" text-anchor="middle" fill="#000">1.2</text>
<path d="M726.5,76 V78.5 M726.5,84 V87" stroke="#000" stroke-width="1"/>
<rect x="705" y="80" width="1.4" height="3" fill="#000"/>
<text x="768.55" y="85" font-family="Liberation Sans" font-size="10" text-anchor="middle" fill="#000">1.0</text>
<path d="M769.5,76 V78.5 M769.5,84 V87" stroke="#000" stroke-width="1"/>
<rect x="747" y="80" width="1.4" height="3" fill="#000"/>
<text x="811.1" y="85" font-family="Liberation Sans" font-size="10" text-anchor="middle" fill="#000">0.8</text>
<path d="M811.5,76 V78.5 M811.5,84 V87" stroke="#000" stroke-width="1"/>
<rect x="790" y="80" width="1.4" height="3" fill="#000"/>
<text x="853.65" y="85" font-family="Liberation Sans" font-size="10" text-anchor="middle" fill="#000">0.6</text>
<path d="M854.5,76 V78.5 M854.5,84 V87" stroke="#000" stroke-width="1"/>
<rect x="832" y="80" width="1.4" height="3" fill="#000"/>
<text x="896.2" y="85" font-family="Liberation Sans" font-size="10" text-anchor="middle" fill="#000">0.4</text>
<path d="M896.5,76 V78.5 M896.5,84 V87" stroke="#000" stroke-width="1"/>
<rect x="875" y="80" width="1.4" height="3" fill="#000"/>
<text x="938.75" y="85" font-family="Liberation Sans" font-size="10" text-anchor="middle" fill="#000">0.2</text>
<path d="M939.5,76 V78.5 M939.5,84 V87" stroke="#000" stroke-width="1"/>
<rect x="917" y="80" width="1.4" height="3" fill="#000"/>
<text x="973.5" y="85" font-family="Liberation Sans" font-size="10" text-anchor="middle" fill="#000">0.0</text>
<rect x="961" y="80" width="1.4" height="3" fill="#000"/>
<rect x="2" y="90" width="1" height="1021" fill="#a0a0a0"/>
<rect x="3" y="91" width="13" height="1020" fill="#fff"/>
<rect x="16" y="90" width="2" height="1021" fill="#f0f0f0"/>
<text transform="translate(13.5,96.5) rotate(-90)" font-family="Liberation Sans" font-size="10" text-anchor="middle" fill="#000">0</text>
<rect x="9" y="129" width="3" height="1.4" fill="#000"/>
<text transform="translate(13.5,158.6) rotate(-90)" font-family="Liberation Sans" font-size="10" text-anchor="middle" fill="#000">20</text>
<path d="M4,158.5 H6 M14,158.5 H16" stroke="#000" stroke-width="1"/>
<rect x="9" y="191" width="3" height="1.4" fill="#000"/>
<text transform="translate(13.5,223.7) rotate(-90)" font-family="Liberation Sans" font-size="10" text-anchor="middle" fill="#000">40</text>
<path d="M4,223.5 H6 M14,223.5 H16" stroke="#000" stroke-width="1"/>
<rect x="9" y="256" width="3" height="1.4" fill="#000"/>
<text transform="translate(13.5,288.8) rotate(-90)" font-family="Liberation Sans" font-size="10" text-anchor="middle" fill="#000">60</text>
<path d="M4,288.5 H6 M14,288.5 H16" stroke="#000" stroke-width="1"/>
<rect x="9" y="321" width="3" height="1.4" fill="#000"/>
<text transform="translate(13.5,353.9) rotate(-90)" font-family="Liberation Sans" font-size="10" text-anchor="middle" fill="#000">80</text>
<path d="M4,353.5 H6 M14,353.5 H16" stroke="#000" stroke-width="1"/>
<rect x="9" y="386" width="3" height="1.4" fill="#000"/>
<text transform="translate(13.5,419) rotate(-90)" font-family="Liberation Sans" font-size="10" text-anchor="middle" fill="#000">100</text>
<path d="M4,419.5 H6 M14,419.5 H16" stroke="#000" stroke-width="1"/>
<rect x="9" y="451" width="3" height="1.4" fill="#000"/>
<text transform="translate(13.5,484.1) rotate(-90)" font-family="Liberation Sans" font-size="10" text-anchor="middle" fill="#000">120</text>
<path d="M4,484.5 H6 M14,484.5 H16" stroke="#000" stroke-width="1"/>
<rect x="9" y="516" width="3" height="1.4" fill="#000"/>
<text transform="translate(13.5,549.2) rotate(-90)" font-family="Liberation Sans" font-size="10" text-anchor="middle" fill="#000">140</text>
<path d="M4,549.5 H6 M14,549.5 H16" stroke="#000" stroke-width="1"/>
<rect x="9" y="581" width="3" height="1.4" fill="#000"/>
<text transform="translate(13.5,614.3) rotate(-90)" font-family="Liberation Sans" font-size="10" text-anchor="middle" fill="#000">160</text>
<path d="M4,614.5 H6 M14,614.5 H16" stroke="#000" stroke-width="1"/>
<rect x="9" y="646" width="3" height="1.4" fill="#000"/>
<text transform="translate(13.5,679.4) rotate(-90)" font-family="Liberation Sans" font-size="10" text-anchor="middle" fill="#000">180</text>
<path d="M4,679.5 H6 M14,679.5 H16" stroke="#000" stroke-width="1"/>
<rect x="9" y="712" width="3" height="1.4" fill="#000"/>
<text transform="translate(13.5,744.5) rotate(-90)" font-family="Liberation Sans" font-size="10" text-anchor="middle" fill="#000">200</text>
<path d="M4,744.5 H6 M14,744.5 H16" stroke="#000" stroke-width="1"/>
<rect x="9" y="777" width="3" height="1.4" fill="#000"/>
<text transform="translate(13.5,809.6) rotate(-90)" font-family="Liberation Sans" font-size="10" text-anchor="middle" fill="#000">220</text>
<path d="M4,809.5 H6 M14,809.5 H16" stroke="#000" stroke-width="1"/>
<rect x="9" y="842" width="3" height="1.4" fill="#000"/>
<text transform="translate(13.5,874.7) rotate(-90)" font-family="Liberation Sans" font-size="10" text-anchor="middle" fill="#000">240</text>
<path d="M4,874.5 H6 M14,874.5 H16" stroke="#000" stroke-width="1"/>
<rect x="9" y="907" width="3" height="1.4" fill="#000"/>
<text transform="translate(13.5,939.8) rotate(-90)" font-family="Liberation Sans" font-size="10" text-anchor="middle" fill="#000">260</text>
<path d="M4,939.5 H6 M14,939.5 H16" stroke="#000" stroke-width="1"/>
<rect x="9" y="972" width="3" height="1.4" fill="#000"/>
<text transform="translate(13.5,1004.9) rotate(-90)" font-family="Liberation Sans" font-size="10" text-anchor="middle" fill="#000">280</text>
<path d="M4,1004.5 H6 M14,1004.5 H16" stroke="#000" stroke-width="1"/>
<rect x="9" y="1037" width="3" height="1.4" fill="#000"/>
<text transform="translate(13.5,1070) rotate(-90)" font-family="Liberation Sans" font-size="10" text-anchor="middle" fill="#000">300</text>
<path d="M4,1070.5 H6 M14,1070.5 H16" stroke="#000" stroke-width="1"/>
<rect x="9" y="1102" width="3" height="1.4" fill="#000"/>
<path d="M4,91.5 H6 M14,91.5 H16" stroke="#000" stroke-width="1"/>
</svg>
<div class="a" style="left:2px;top:1112px;width:34px;height:21px;background:#e6e6e6;border:1px solid #c8c8c8;"></div>
<div class="t" style="left:2px;top:1116px;font-size:11px;color:#e03030;width:34px;text-align:center">Man.</div>
<div class="a" style="left:38px;top:1112px;width:31px;height:21px;background:#e6e6e6;border:1px solid #c8c8c8;"></div>
<div class="t" style="left:38px;top:1116px;font-size:11px;color:#000;width:31px;text-align:center">&lt; / &gt;</div>
<div class="a" style="left:71px;top:1112px;width:23px;height:21px;background:#e6e6e6;border:1px solid #c8c8c8;"></div>
<div class="t" style="left:71px;top:1116px;font-size:11px;color:#000;width:23px;text-align:center">1&#963;</div>
<div class="a" style="left:96px;top:1112px;width:23px;height:21px;background:#e6e6e6;border:1px solid #c8c8c8;"></div>
<div class="t" style="left:96px;top:1116px;font-size:11px;color:#000;width:23px;text-align:center">3&#963;</div>
<div class="a" style="left:128px;top:1112px;width:32px;height:21px;background:#e6e6e6;border:1px solid #c8c8c8;"></div>
<div class="t" style="left:128px;top:1116px;font-size:11px;color:#000;width:32px;text-align:center">OPT</div>
<div class="a" style="left:162px;top:1112px;width:932px;height:21px;background:#f0f0f0;border-left:2px solid #a0a0a0;border-top:1px solid #c8c8c8"></div>
<div class="a" style="left:560px;top:1113px;width:311px;height:19px;border:1px solid #404040;border-top-color:#f8f8f8;border-left-color:#f0f0f0;border-radius:0 3px 3px 3px;background:#f0f0f0"></div>
<div class="a" style="left:598px;top:1114px;width:1px;height:14px;background:#808080"></div>
<div class="a" style="left:831px;top:1114px;width:1px;height:14px;background:#808080"></div>
<div class="a" style="left:0;top:1134px;width:1920px;height:1px;background:#d8d8d8"></div>
<div class="a" style="left:1px;top:1138px;width:139px;height:18px;border-left:1px solid #a0a0a0;border-top:1px solid #a0a0a0;border-right:1px solid #fff;border-bottom:1px solid #fff"></div>
<div class="t" style="left:1px;top:1141px;font-size:11px;color:#1a1a1a;"></div>
<div class="t" style="left:27px;top:1141px;font-size:11px;color:#1a1a1a;">PI400/450 #18072076</div>
<svg class="a" style="left:3px;top:1140px" width="16" height="14" viewBox="0 0 16 14"><path d="M1,7 H14 M4,7 L8,2 H11 M4,7 L8,12 H11" fill="none" stroke="#333" stroke-width="1.2"/><circle cx="12" cy="2" r="1.6" fill="#333"/><circle cx="12" cy="12" r="1.6" fill="#333"/><path d="M13,5 l3,2 l-3,2z" fill="#333"/></svg>
<div class="a" style="left:143px;top:1138px;width:25px;height:18px;border-left:1px solid #a0a0a0;border-top:1px solid #a0a0a0;border-right:1px solid #fff;border-bottom:1px solid #fff"></div>
<div class="t" style="left:145px;top:1141px;font-size:11px;color:#1a1a1a;">80&#176;</div>
<div class="a" style="left:171px;top:1138px;width:72px;height:18px;border-left:1px solid #a0a0a0;border-top:1px solid #a0a0a0;border-right:1px solid #fff;border-bottom:1px solid #fff"></div>
<div class="t" style="left:175px;top:1141px;font-size:11px;color:#1a1a1a;">-4&#176;F .. 212&#176;F</div>
<div class="a" style="left:245px;top:1138px;width:58px;height:18px;border-left:1px solid #a0a0a0;border-top:1px solid #a0a0a0;border-right:1px solid #fff;border-bottom:1px solid #fff"></div>
<div class="t" style="left:249px;top:1141px;font-size:11px;color:#1a1a1a;"></div>
<div class="a" style="left:307px;top:1138px;width:69px;height:18px;border-left:1px solid #a0a0a0;border-top:1px solid #a0a0a0;border-right:1px solid #fff;border-bottom:1px solid #fff"></div>
<div class="t" style="left:312px;top:1141px;font-size:11px;color:#1a1a1a;">81Hz/20Hz</div>
<div class="a" style="left:377px;top:1138px;width:48px;height:18px;border-left:1px solid #a0a0a0;border-top:1px solid #a0a0a0;border-right:1px solid #fff;border-bottom:1px solid #fff"></div>
<div class="t" style="left:381px;top:1141px;font-size:11px;color:#1a1a1a;">&#949;=1.000</div>
<div class="a" style="left:428px;top:1138px;width:40px;height:18px;border-left:1px solid #a0a0a0;border-top:1px solid #a0a0a0;border-right:1px solid #fff;border-bottom:1px solid #fff"></div>
<div class="t" style="left:431px;top:1141px;font-size:11px;color:#1a1a1a;">76.7&#176;F</div>
<div class="a" style="left:471px;top:1138px;width:1px;height:18px;background:#a0a0a0"></div>
<div class="a" style="left:475px;top:1138px;width:23px;height:18px;border-left:1px solid #a0a0a0;border-top:1px solid #a0a0a0;border-right:1px solid #fff;border-bottom:1px solid #fff"></div>
<div class="t" style="left:475px;top:1141px;font-size:11px;color:#1a1a1a;"></div>
<svg class="a" style="left:481px;top:1139px" width="14" height="18" viewBox="0 0 14 18"><circle cx="7" cy="6.5" r="5" fill="#cfe8f8" stroke="#5a8ab0" stroke-width="1.2"/><rect x="5.5" y="11" width="3" height="6" fill="#d8b040"/></svg>
<div class="a" style="left:0;top:1160px;width:1920px;height:40px;background:linear-gradient(90deg,#2d2f2f 0%,#2d2f2f 60%,#1c1c20 63.5%,#15141b 66%,#26131f 75%,#2e141a 83%,#3a1a12 91%,#30220f 100%)"></div>
<svg class="a" style="left:0;top:1160px" width="1920" height="40" viewBox="0 0 1920 40">
<path d="M16,12.8 l7,-0.9 v7.4 h-7z M24,11.8 l8.5,-1.1 v8.6 h-8.5z M16,20.3 h7 v7.4 l-7,-0.9z M24,20.3 h8.5 v8.6 l-8.5,-1.1z" fill="#fff"/>
<path d="M64.5,14 h11 v11 h-11z" fill="none" stroke="#fff" stroke-width="1.3"/><path d="M63,12 h13 M63,27 h13 M79,13 v13" stroke="#fff" stroke-width="1.2"/><rect x="78.5" y="17" width="1.5" height="2" fill="#2c2c2c"/>
<path d="M112,13 h8 l2,2 h11 v14 h-21z" fill="#e8b838"/><rect x="112" y="17" width="21" height="12" fill="#f8d878"/><path d="M117,29 v-6 h11 v6 h-3 v-3 h-5 v3z" fill="#2a8ee0"/>
<ellipse cx="172" cy="20" rx="12" ry="7" transform="rotate(-30 172 20)" fill="none" stroke="#e8b020" stroke-width="1.6"/><circle cx="172" cy="21" r="8" fill="none" stroke="#2a90e0" stroke-width="4"/><path d="M164,21 h16" stroke="#2a90e0" stroke-width="3"/><path d="M174,25 h8" stroke="#2c2c2c" stroke-width="3"/>
<rect x="204" y="0" width="36" height="40" fill="#343434"/><rect x="209" y="8" width="24" height="24" fill="#fff"/><circle cx="221" cy="20" r="7" fill="#e01818"/><path d="M221,8 v24 M209,20 h24" stroke="#e01818" stroke-width="1.2"/><path d="M221,13 v14 M214,20 h14" stroke="#fff" stroke-width="1.4"/>
<rect x="201" y="37" width="40" height="3" fill="#76b9ed" opacity="0.8"/>
<rect x="246" y="0" width="48" height="40" fill="#464646"/><rect x="246" y="37" width="48" height="3" fill="#76b9ed"/>
<path d="M259,14 l9,-3 h5 v16 h-5 l-9,-2z" fill="#d0d0d0"/><circle cx="276" cy="19.5" r="6" fill="#222"/><circle cx="276" cy="19.5" r="3.2" fill="#555"/>
<path d="M1737,23 l5,-5 l5,5" fill="none" stroke="#fff" stroke-width="1.3"/>
<rect x="1760.5" y="14.5" width="14" height="10" fill="none" stroke="#fff"/><path d="M1763,24 v6 h6" fill="none" stroke="#fff"/><path d="M1770,31 l3.5,-6 l3.5,6z" fill="#f0b000"/>
<path d="M1784,16 h3 l4,-4 v16 l-4,-4 h-3z" fill="none" stroke="#fff" stroke-width="1.1"/><path d="M1793,17 l4,4 M1797,17 l-4,4" stroke="#fff" stroke-width="1.1"/>
<path d="M1879,11 h17 v12 h-12 l-4,4 v-4 h-1z" fill="#fff"/><path d="M1882,15 h11 M1882,18 h11" stroke="#333" stroke-width="1"/><circle cx="1894" cy="27" r="6" fill="#2c2c2c" stroke="#888"/><text x="1891.5" y="31" font-family="Liberation Sans" font-size="10" fill="#fff">1</text>
<rect x="1914" y="0" width="1" height="40" fill="#555"/>
</svg>
<div class="hdr" style="left:1099px;width:129px"><span>Temperature ...</span></div>
<svg class="a" style="left:1195px;top:74px" width="30" height="14" viewBox="0 0 30 14"><path d="M3.5,1.5 h6 M4.5,1.5 v7 M8.5,1.5 v7 M2,8.5 h9 M6.5,8.5 v4" fill="none" stroke="#000" stroke-width="1.3"/><path d="M18,2 l8,9 M26,2 l-8,9" stroke="#000" stroke-width="1.6"/></svg>
<div class="hdr" style="left:1232px;width:128px"><span>Reference bar</span></div>
<svg class="a" style="left:1327px;top:74px" width="30" height="14" viewBox="0 0 30 14"><path d="M3.5,1.5 h6 M4.5,1.5 v7 M8.5,1.5 v7 M2,8.5 h9 M6.5,8.5 v4" fill="none" stroke="#000" stroke-width="1.3"/><path d="M18,2 l8,9 M26,2 l-8,9" stroke="#000" stroke-width="1.6"/></svg>
<div class="hdr" style="left:1364px;width:212px"><span>Temperatures</span></div>
<svg class="a" style="left:1543px;top:74px" width="30" height="14" viewBox="0 0 30 14"><path d="M3.5,1.5 h6 M4.5,1.5 v7 M8.5,1.5 v7 M2,8.5 h9 M6.5,8.5 v4" fill="none" stroke="#000" stroke-width="1.3"/><path d="M18,2 l8,9 M26,2 l-8,9" stroke="#000" stroke-width="1.6"/></svg>
<div class="hdr" style="left:1580px;width:340px"><span>Snapshot history</span></div>
<svg class="a" style="left:1887px;top:74px" width="30" height="14" viewBox="0 0 30 14"><path d="M3.5,1.5 h6 M4.5,1.5 v7 M8.5,1.5 v7 M2,8.5 h9 M6.5,8.5 v4" fill="none" stroke="#000" stroke-width="1.3"/><path d="M18,2 l8,9 M26,2 l-8,9" stroke="#000" stroke-width="1.6"/></svg>
<div class="a" style="left:1095px;top:90px;width:4px;height:1044px;background:#f0f0f0"></div>
<div class="a" style="left:1099px;top:90px;width:129px;height:1044px;background:#fff"></div>
<div class="a" style="left:1232px;top:90px;width:128px;height:1044px;background:#fff"></div>
<div class="a" style="left:1364px;top:90px;width:212px;height:1044px;background:#f0f0f0"></div>
<svg class="a" style="left:1099px;top:90px" width="129" height="1044" viewBox="1099 90 129 1044">
<path d="M1105.5,101 V1096" stroke="#b0b0b0" stroke-width="1" stroke-dasharray="1 1"/>
<path d="M1134.5,101 V1096" stroke="#b0b0b0" stroke-width="1" stroke-dasharray="1 1"/>
<path d="M1149.5,101 V1096" stroke="#b0b0b0" stroke-width="1" stroke-dasharray="1 1"/>
<path d="M1164.5,101 V1096" stroke="#b0b0b0" stroke-width="1" stroke-dasharray="1 1"/>
<path d="M1179.5,101 V1096" stroke="#b0b0b0" stroke-width="1" stroke-dasharray="1 1"/>
<path d="M1194.5,101 V1096" stroke="#b0b0b0" stroke-width="1" stroke-dasharray="1 1"/>
<path d="M1209.5,101 V1096" stroke="#b0b0b0" stroke-width="1" stroke-dasharray="1 1"/>
<path d="M1223.5,100 V1096" stroke="#000" stroke-width="1" stroke-dasharray="1 1"/>
<path d="M1105,1096.5 H1224" stroke="#000" stroke-width="1"/>
<path d="M1105.5,1096 V1101" stroke="#000" stroke-width="1"/>
<path d="M1119.5,1096 V1101" stroke="#000" stroke-width="1"/>
<path d="M1134.5,1096 V1101" stroke="#000" stroke-width="1"/>
<path d="M1149.5,1096 V1101" stroke="#000" stroke-width="1"/>
<path d="M1164.5,1096 V1101" stroke="#000" stroke-width="1"/>
<path d="M1179.5,1096 V1101" stroke="#000" stroke-width="1"/>
<path d="M1194.5,1096 V1101" stroke="#000" stroke-width="1"/>
<path d="M1209.5,1096 V1101" stroke="#000" stroke-width="1"/>
<path d="M1223.5,1096 V1101" stroke="#000" stroke-width="1"/>
<text transform="translate(1109,1131) rotate(-90)" font-family="Liberation Sans" font-size="10" text-anchor="start" fill="#000">155.0</text>
<text transform="translate(1138,1131) rotate(-90)" font-family="Liberation Sans" font-size="10" text-anchor="start" fill="#000">138.0</text>
<text transform="translate(1153,1131) rotate(-90)" font-family="Liberation Sans" font-size="10" text-anchor="start" fill="#000">129.0</text>
<text transform="translate(1168,1131) rotate(-90)" font-family="Liberation Sans" font-size="10" text-anchor="start" fill="#000">120.0</text>
<text transform="translate(1183,1131) rotate(-90)" font-family="Liberation Sans" font-size="10" text-anchor="start" fill="#000">111.0</text>
<text transform="translate(1198,1131) rotate(-90)" font-family="Liberation Sans" font-size="10" text-anchor="start" fill="#000">102.0</text>
<text transform="translate(1213,1131) rotate(-90)" font-family="Liberation Sans" font-size="10" text-anchor="start" fill="#000">93.0</text>
<text transform="translate(1227,1131) rotate(-90)" font-family="Liberation Sans" font-size="10" text-anchor="start" fill="#000">84.0</text>
<path d="M1223,100 L1190,106 L1126,116 Q1122,117.5 1127,119 L1185,132 Q1188,134 1184,135 L1113,153 Q1109,155 1109,162 L1108,200 L1107.5,340 L1107,700 L1107.5,900 L1110,1060 Q1111,1074 1117,1078 L1150,1082 L1180,1085 L1207,1089 Q1216,1091 1220,1095 Q1223,1099 1225,1105" fill="none" stroke="#2a7a2a" stroke-width="1"/>
</svg>
<svg class="a" style="left:1232px;top:90px" width="128" height="1044" viewBox="1232 90 128 1044">
<defs><linearGradient id="refg" x1="0" y1="0" x2="0" y2="1">
<stop offset="0.0000" stop-color="#ffd400"/>
<stop offset="0.0549" stop-color="#ffbc00"/>
<stop offset="0.1315" stop-color="#ffa000"/>
<stop offset="0.2209" stop-color="#f58000"/>
<stop offset="0.3103" stop-color="#ee6010"/>
<stop offset="0.3487" stop-color="#e85020"/>
<stop offset="0.3934" stop-color="#e04038"/>
<stop offset="0.4444" stop-color="#d83068"/>
<stop offset="0.5019" stop-color="#c8189a"/>
<stop offset="0.6424" stop-color="#8010a0"/>
<stop offset="0.7446" stop-color="#4010a0"/>
<stop offset="0.8467" stop-color="#1c0a88"/>
<stop offset="0.9234" stop-color="#0c0860"/>
<stop offset="0.9617" stop-color="#000040"/>
<stop offset="1.0000" stop-color="#00002a"/>
</linearGradient></defs>
<rect x="1247.5" y="100.5" width="18" height="1025" fill="#fff" stroke="#000" stroke-width="1"/>
<rect x="1249" y="102" width="15" height="221" fill="#000"/>
<rect x="1249" y="322" width="15" height="802" fill="url(#refg)"/>
<path d="M1266,100.5 H1272" stroke="#000" stroke-width="1"/>
<path d="M1266,202.5 H1272" stroke="#000" stroke-width="1"/>
<path d="M1266,305.5 H1272" stroke="#000" stroke-width="1"/>
<path d="M1266,407.5 H1272" stroke="#000" stroke-width="1"/>
<path d="M1266,510.5 H1272" stroke="#000" stroke-width="1"/>
<path d="M1266,612.5 H1272" stroke="#000" stroke-width="1"/>
<path d="M1266,715.5 H1272" stroke="#000" stroke-width="1"/>
<path d="M1266,817.5 H1272" stroke="#000" stroke-width="1"/>
<path d="M1266,920.5 H1272" stroke="#000" stroke-width="1"/>
<path d="M1266,1022.5 H1272" stroke="#000" stroke-width="1"/>
<path d="M1266,1125.5 H1272" stroke="#000" stroke-width="1"/>
<text x="1273" y="105" font-family="Liberation Sans" font-size="11" fill="#000">160.4</text>
<text x="1273" y="618" font-family="Liberation Sans" font-size="11" fill="#000">124.3</text>
<text x="1273" y="1130" font-family="Liberation Sans" font-size="11" fill="#000">88.3</text>
<path d="M1277,252.5 l8,-7.5 v4.5 h16 v6 h-16 v4.5 z" fill="#808080"/>
<path d="M1240.5,318.5 v7 h6 z" fill="#fff" stroke="#000" stroke-width="0.9"/>
</svg>
<div class="a" style="left:1367px;top:93px;width:119px;height:64px;background:#f0f0f0;border-left:2px solid #a0a0a0;border-top:2px solid #a0a0a0;border-right:1px solid #fff;border-bottom:1px solid #fff"></div>
<div class="t" style="left:1371px;top:95px;font-size:11px;color:#000;font-weight:bold">down</div>
<div class="t" style="left:1374px;top:110px;font-size:27px;color:#e01010;letter-spacing:0px">137.5&#176;F</div>
<svg class="a" style="left:1367px;top:93px" width="119" height="64" viewBox="0 0 119 64"><rect x="6.5" y="52.5" width="108" height="6" fill="#fff" stroke="#000" stroke-width="1"/><rect x="7" y="53" width="62" height="5" fill="#e80000"/><path d="M23,48.5 h8 l-4,4z" fill="#1020d0"/><path d="M45,48.5 h8 l-4,4z" fill="#e01010"/></svg>
<div class="a" style="left:1367px;top:165px;width:119px;height:64px;background:#f0f0f0;border-left:2px solid #a0a0a0;border-top:2px solid #a0a0a0;border-right:1px solid #fff;border-bottom:1px solid #fff"></div>
<div class="t" style="left:1371px;top:167px;font-size:11px;color:#000;font-weight:normal">middle</div>
<div class="t" style="left:1374px;top:182px;font-size:27px;color:#e01010;letter-spacing:0px">137.5&#176;F</div>
<svg class="a" style="left:1367px;top:165px" width="119" height="64" viewBox="0 0 119 64"><rect x="6.5" y="52.5" width="108" height="6" fill="#fff" stroke="#000" stroke-width="1"/><rect x="7" y="53" width="62" height="5" fill="#e80000"/><path d="M23,48.5 h8 l-4,4z" fill="#1020d0"/><path d="M45,48.5 h8 l-4,4z" fill="#e01010"/></svg>
<div class="a" style="left:1367px;top:237px;width:119px;height:64px;background:#f0f0f0;border-left:2px solid #a0a0a0;border-top:2px solid #a0a0a0;border-right:1px solid #fff;border-bottom:1px solid #fff"></div>
<div class="t" style="left:1371px;top:239px;font-size:11px;color:#d02828;font-weight:normal">hotspott</div>
<div class="t" style="left:1374px;top:254px;font-size:27px;color:#e01010;letter-spacing:0px">155.1&#176;F</div>
<svg class="a" style="left:1367px;top:237px" width="119" height="64" viewBox="0 0 119 64"><rect x="6.5" y="52.5" width="108" height="6" fill="#fff" stroke="#000" stroke-width="1"/><rect x="7" y="53" width="72" height="5" fill="#e80000"/><path d="M23,48.5 h8 l-4,4z" fill="#1020d0"/><path d="M45,48.5 h8 l-4,4z" fill="#e01010"/></svg>
<div class="a" style="left:1367px;top:309px;width:119px;height:64px;background:#f0f0f0;border-left:2px solid #a0a0a0;border-top:2px solid #a0a0a0;border-right:1px solid #fff;border-bottom:1px solid #fff"></div>
<div class="t" style="left:1371px;top:311px;font-size:11px;color:#000;font-weight:normal">up</div>
<div class="t" style="left:1374px;top:326px;font-size:27px;color:#e01010;letter-spacing:0px">138.0&#176;F</div>
<svg class="a" style="left:1367px;top:309px" width="119" height="64" viewBox="0 0 119 64"><rect x="6.5" y="52.5" width="108" height="6" fill="#fff" stroke="#000" stroke-width="1"/><rect x="7" y="53" width="62" height="5" fill="#e80000"/><path d="M23,48.5 h8 l-4,4z" fill="#1020d0"/><path d="M45,48.5 h8 l-4,4z" fill="#e01010"/></svg>
<div class="a" style="left:1367px;top:381px;width:119px;height:64px;background:#f0f0f0;border-left:2px solid #a0a0a0;border-top:2px solid #a0a0a0;border-right:1px solid #fff;border-bottom:1px solid #fff"></div>
<div class="t" style="left:1371px;top:383px;font-size:11px;color:#000;font-weight:normal">Cursor:</div>
<svg class="a" style="left:1367px;top:381px" width="119" height="64" viewBox="0 0 119 64"><rect x="6.5" y="52.5" width="108" height="6" fill="#fff" stroke="#000" stroke-width="1"/><path d="M23,48.5 h8 l-4,4z" fill="#1020d0"/><path d="M45,48.5 h8 l-4,4z" fill="#e01010"/></svg>
<div class="a" style="left:1580px;top:90px;width:340px;height:1044px;background:#f0f0f0"></div>
<div class="a" style="left:1580px;top:90px;width:322px;height:1044px;background:#fff"></div>
<svg class="a" style="left:1580px;top:90px" width="322" height="1044" viewBox="1580 90 322 1044"><defs><filter id="soft" x="0" y="0" width="1" height="1" color-interpolation-filters="sRGB"><feGaussianBlur stdDeviation="0.7"/></filter></defs>
<g filter="url(#soft)"><g transform="translate(1580,90) scale(0.377049,0.236043) translate(-128,-90)"><rect x="128" y="90" width="854" height="1021" fill="#000"/><g clip-path="url(#cam)"><g filter="url(#pal)"><use href="#sceneT"/></g></g></g></g>
<text x="1584" y="323" font-family="Liberation Sans" font-size="21.5" fill="#fff" stroke="#000" stroke-width="1.8" paint-order="stroke">Oct-25-</text>
<text x="1896" y="323" font-family="Liberation Sans" font-size="21.5" fill="#fff" stroke="#000" stroke-width="1.8" paint-order="stroke" text-anchor="end">11:23:50</text>
<g filter="url(#soft)"><g transform="translate(1580,334) scale(0.377049,0.236043) translate(-128,-90)"><rect x="128" y="90" width="854" height="1021" fill="#000"/><g clip-path="url(#cam)"><g filter="url(#pal)"><use href="#sceneT"/></g></g></g></g>
<text x="1584" y="567" font-family="Liberation Sans" font-size="21.5" fill="#fff" stroke="#000" stroke-width="1.8" paint-order="stroke">Oct-25-</text>
<text x="1896" y="567" font-family="Liberation Sans" font-size="21.5" fill="#fff" stroke="#000" stroke-width="1.8" paint-order="stroke" text-anchor="end">11:23:23</text>
<g filter="url(#soft)"><g transform="translate(1580,578) scale(0.377049,0.236043) translate(-128,-90)"><rect x="128" y="90" width="854" height="1021" fill="#000"/><g clip-path="url(#cam)"><g filter="url(#pal)"><use href="#sceneT"/></g></g></g></g>
<text x="1584" y="811" font-family="Liberation Sans" font-size="21.5" fill="#fff" stroke="#000" stroke-width="1.8" paint-order="stroke">Oct-25-</text>
<text x="1896" y="811" font-family="Liberation Sans" font-size="21.5" fill="#fff" stroke="#000" stroke-width="1.8" paint-order="stroke" text-anchor="end">11:22:56</text>
<g filter="url(#soft)"><g transform="translate(1580,822) scale(0.377049,0.236043) translate(-128,-90)"><rect x="128" y="90" width="854" height="1021" fill="#000"/><g clip-path="url(#cam)"><g filter="url(#pal)"><use href="#sceneT"/></g></g></g></g>
<text x="1584" y="1055" font-family="Liberation Sans" font-size="21.5" fill="#fff" stroke="#000" stroke-width="1.8" paint-order="stroke">Oct-25-</text>
<text x="1896" y="1055" font-family="Liberation Sans" font-size="21.5" fill="#fff" stroke="#000" stroke-width="1.8" paint-order="stroke" text-anchor="end">11:22:29</text>
<g filter="url(#soft)"><g transform="translate(1580,1066) scale(0.377049,0.236043) translate(-128,-90)"><rect x="128" y="90" width="854" height="1021" fill="#000"/><g clip-path="url(#cam)"><g filter="url(#pal)"><use href="#sceneT"/></g></g></g></g>
</svg>
<div class="a" style="left:1580px;top:1134px;width:340px;height:26px;background:#f0f0f0"></div>
<svg class="a" style="left:1902px;top:90px" width="18" height="1044" viewBox="0 0 18 1044"><rect width="18" height="1044" fill="#f0f0f0"/><path d="M5,12 l4,-4 l4,4" fill="none" stroke="#606060" stroke-width="1.5"/><rect x="2" y="17" width="14" height="867" fill="#cdcdcd"/><path d="M5,1032 l4,4 l4,-4" fill="none" stroke="#606060" stroke-width="1.5"/></svg>
</body></html>
